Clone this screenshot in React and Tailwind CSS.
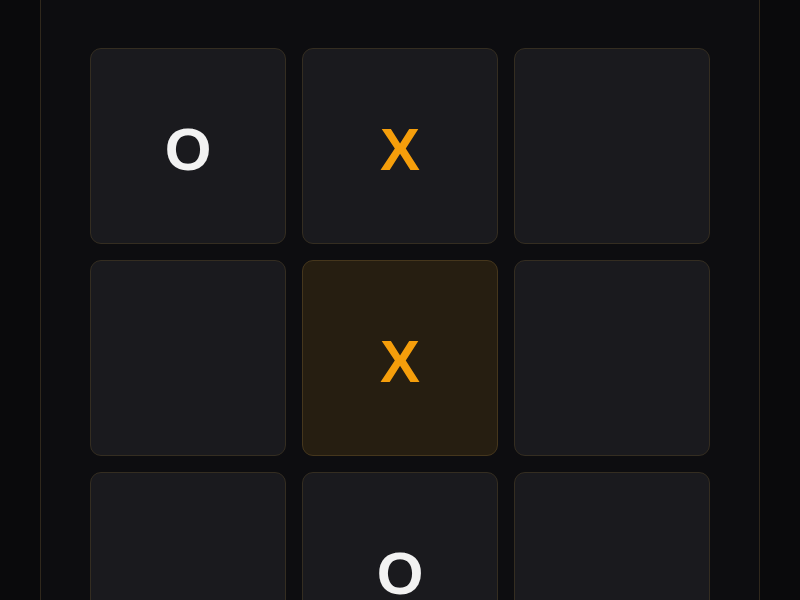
export default function App() {
  const board = ["O", "X", "", "", "X", "", "", "O", ""];
  const highlight = 4;

  return (
    <div className="min-h-screen bg-[#0a0a0c] overflow-hidden" style={{ height: 600 }}>
      <div className="mx-10 h-full bg-[#0d0d10] border-x border-[#30281c] pt-12 px-[49px]">
        <div className="grid grid-cols-3 gap-4">
          {board.map((v, i) => (
            <div
              key={i}
              className={`h-[196px] rounded-[11px] border pt-2 flex items-center justify-center text-[60px] font-bold ${
                i === highlight
                  ? "bg-[#261e11] border-[#45361c]"
                  : "bg-[#1a1a1e] border-[#342d21]"
              } ${v === "X" ? "text-[#f59e0b]" : "text-[#f2f2f2]"}`}
              style={{ fontFamily: '"Liberation Sans", Arial, sans-serif' }}
            >
              {v}
            </div>
          ))}
        </div>
      </div>
    </div>
  );
}
